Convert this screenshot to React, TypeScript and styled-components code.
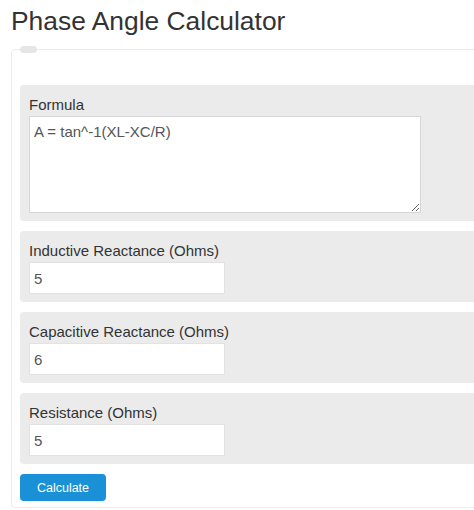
import React from 'react';
import styled, { createGlobalStyle } from 'styled-components';

const GlobalStyle = createGlobalStyle`
    html, body {
        margin: 0;
        padding: 0;
        background: #ffffff;
        overflow: hidden;
    }
    body {
        font-family: 'Liberation Sans', Arial, sans-serif;
        color: #333333;
    }
`;

const fields = [
    { label: 'Inductive Reactance (Ohms)', value: '5' },
    { label: 'Capacitive Reactance (Ohms)', value: '6' },
    { label: 'Resistance (Ohms)', value: '5' },
];

const App = () => {
    return (
        <Page>
            <GlobalStyle />
            <Title>Phase Angle Calculator</Title>
            <Form>
                <Legend />
                <Panel>
                    <Label>Formula</Label>
                    <FormulaBox defaultValue="A = tan^-1(XL-XC/R)" />
                </Panel>
                {fields.map((field) => (
                    <Panel key={field.label}>
                        <Label>{field.label}</Label>
                        <NumberInput type="text" defaultValue={field.value} />
                    </Panel>
                ))}
                <CalculateButton type="button">Calculate</CalculateButton>
            </Form>
        </Page>
    );
};

const Page = styled.div`
    width: 474px;
    height: 510px;
    overflow: hidden;
`;

const Title = styled.h1`
    margin: 6px 0 0 11px;
    font-size: 26.4px;
    line-height: 30px;
    font-weight: 400;
    color: #333333;
    white-space: nowrap;
`;

const Form = styled.fieldset`
    margin: 10px 0 0 11px;
    width: 560px;
    min-width: 560px;
    padding: 32px 8px 6px 8px;
    border: 1px solid #ececec;
    border-radius: 4px;
    display: flex;
    flex-direction: column;
    gap: 10px;
`;

const Legend = styled.legend`
    width: 17px;
    height: 7px;
    padding: 0;
    margin: 0;
    background: #e6e6e6;
    border-radius: 4px;
`;

const Panel = styled.div`
    background: #ebebeb;
    border-radius: 4px;
    padding: 9px 9px 8px 9px;
    display: flex;
    flex-direction: column;
    align-items: flex-start;
`;

const Label = styled.label`
    display: block;
    font-size: 15px;
    line-height: 22px;
    color: #333333;
`;

const FormulaBox = styled.textarea`
    box-sizing: border-box;
    width: 392px;
    height: 97px;
    margin: 0;
    padding: 5px 4px;
    border: 1px solid #d6d6d6;
    border-radius: 0;
    background: #ffffff;
    font-family: 'Liberation Sans', Arial, sans-serif;
    font-size: 15px;
    line-height: 20px;
    color: #555555;
    outline: none;
`;

const NumberInput = styled.input`
    box-sizing: border-box;
    width: 196px;
    height: 32px;
    margin: 0;
    padding: 0 4px;
    border: 1px solid #e2e2e2;
    background: #ffffff;
    font-family: 'Liberation Sans', Arial, sans-serif;
    font-size: 15px;
    color: #555555;
    outline: none;
`;

const CalculateButton = styled.button`
    align-self: flex-start;
    width: 86px;
    height: 27px;
    padding: 0;
    border: none;
    border-radius: 4px;
    background: #1a91d7;
    color: #ffffff;
    font-family: 'Liberation Sans', Arial, sans-serif;
    font-size: 12.5px;
    cursor: pointer;
`;

export default App;
